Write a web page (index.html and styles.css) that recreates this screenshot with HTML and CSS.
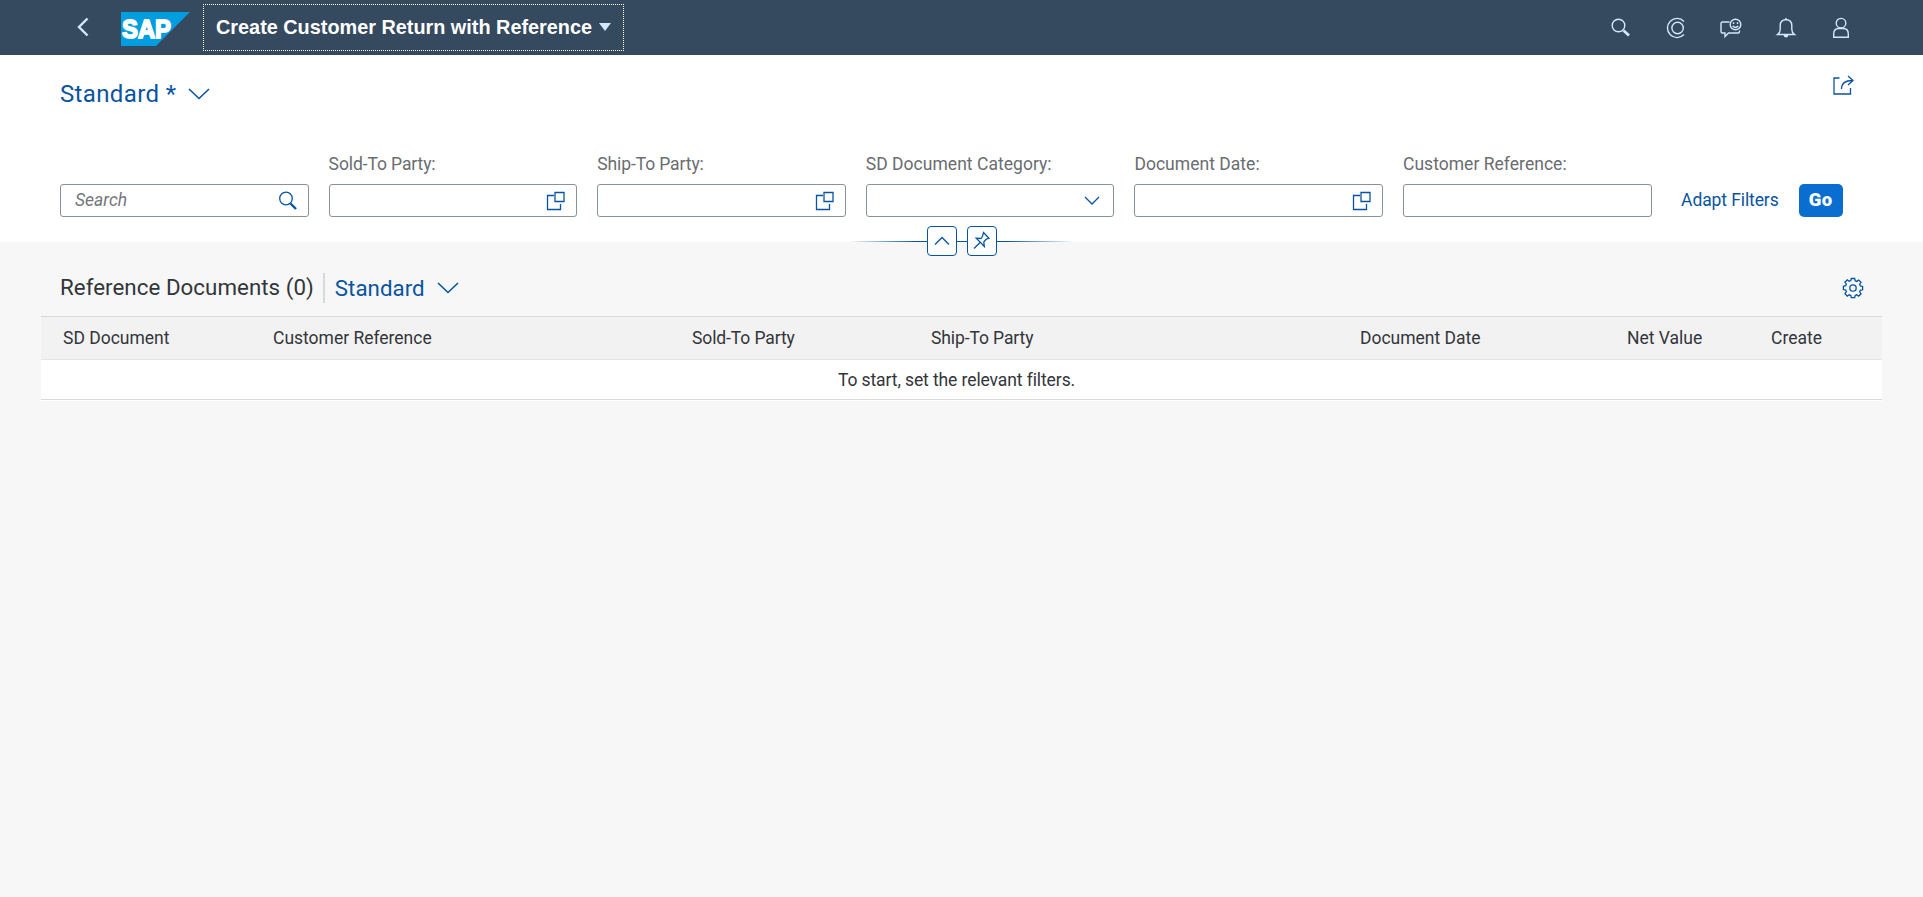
FILE: index.html
```html
<!DOCTYPE html>
<html lang="en">
<head>
<meta charset="utf-8">
<title>Create Customer Return with Reference</title>
<link rel="stylesheet" href="styles.css">
</head>
<body>
<header class="shell">
  <svg class="back" viewBox="0 0 12 20"><path d="M10.500 1.500 2 10l8.500 8.500"/></svg>
  <svg class="logo" viewBox="0 0 69 34"><path d="M0 0h69L35 34H0z"/><text x="1" y="26.300" textLength="49" lengthAdjust="spacingAndGlyphs">SAP</text></svg>
  <button class="app-title"><span>Create Customer Return with Reference</span><svg class="caret" viewBox="0 0 12 8"><path d="M0 0h12L6 8z"/></svg></button>
  <nav class="tools">
    <svg viewBox="0 0 22 22"><circle cx="8.500" cy="8.500" r="6.300"/><path class="thick" d="m13.500 13.500 5.500 5"/></svg>
    <svg viewBox="0 0 22 22"><path d="M19 4.400a9.600 9.600 0 1 0 0 13.200"/><circle cx="12.600" cy="11" r="5.700"/></svg>
    <svg viewBox="0 0 22 22"><path d="M9.500 5H2.500Q1 5 1 6.500v8Q1 16 2.500 16h2.500v3.500L8.500 16H18q1.500 0 1.500-1.500V13.500"/><circle cx="15.500" cy="7.500" r="5.300"/><path d="M13.500 5.300v1.700m4-1.700v1.700M12.700 9q2.800 2.800 5.600 0"/></svg>
    <svg viewBox="0 0 22 22"><path d="M2.500 17.500h17q-2.700-2-2.700-5V8.500q0-5.500-5.800-6Q5.200 3 5.200 8.500v4q0 3-2.700 5zM11 2.500V1"/><path class="solid" d="M8.500 18h5q-.5 2.500-2.500 2.500T8.500 18z"/></svg>
    <svg viewBox="0 0 22 22"><circle cx="11" cy="6.200" r="4.800"/><path d="M3.700 20.300v-3.300q0-5.500 5-5.500h4.600q5 0 5 5.500v3.300z"/></svg>
  </nav>
</header>
<section class="filters">
  <div class="variant-row">
    <div class="variant"><span>Standard *</span><svg class="chevron" viewBox="0 0 22 12"><path d="m1 1 10 9.500L21 1"/></svg></div>
    <svg class="share" viewBox="0 0 22 22"><path d="M7.500 4H2v16h16.500v-6M9.500 15q0-8.500 11-8.500M16 2l5 4.500-5 4.500"/></svg>
  </div>
  <div class="fields">
    <div class="field"><div class="input"><i class="placeholder">Search</i><svg class="icon" viewBox="0 0 20 20"><circle cx="8" cy="7.500" r="6.300"/><path class="thick" d="m12.500 12.500 5.500 5.500"/></svg></div></div>
    <div class="field"><label class="tight">Sold-To Party:</label><div class="input"><svg class="icon" viewBox="0 0 20 20"><path d="M8 4.500H1.500v14h13V13M9 1.500h9v9H9z"/></svg></div></div>
    <div class="field"><label class="tight">Ship-To Party:</label><div class="input"><svg class="icon" viewBox="0 0 20 20"><path d="M8 4.500H1.500v14h13V13M9 1.500h9v9H9z"/></svg></div></div>
    <div class="field"><label>SD Document Category:</label><div class="input"><svg class="icon arrow" viewBox="0 0 16 10"><path d="m1 1 7 7 7-7"/></svg></div></div>
    <div class="field"><label>Document Date:</label><div class="input"><svg class="icon" viewBox="0 0 20 20"><path d="M8 4.500H1.500v14h13V13M9 1.500h9v9H9z"/></svg></div></div>
    <div class="field"><label>Customer Reference:</label><div class="input"></div></div>
    <a class="adapt">Adapt Filters</a>
    <button class="go">Go</button>
  </div>
  <div class="snap">
    <button><svg viewBox="0 0 28 28"><path d="m7 17.500 7-7 7 7"/></svg></button>
    <button><svg viewBox="0 0 28 28"><path d="M15.500 5.500 21 11.200l-3.200 1.300-2 2.500.5 4.500-8-8.300 4.700.3 1.500-2.200zM12 15.500l-6 6"/></svg></button>
  </div>
</section>
<main class="content">
  <div class="toolbar">
    <span class="table-title">Reference Documents (0)</span>
    <div class="table-variant"><span>Standard</span><svg class="chevron" viewBox="0 0 22 12"><path d="m1 1 10 9.500L21 1"/></svg></div>
    <svg class="gear" viewBox="0 0 22 22"><circle cx="11" cy="11" r="3.200"/><path d="M9.300 1.500h3.400l.5 2.300 1.500.6 2-1.300 2.300 2.300-1.300 2 .6 1.500 2.300.5v3.400l-2.300.5-.6 1.500 1.300 2-2.300 2.300-2-1.300-1.500.6-.5 2.300H9.300l-.5-2.300-1.500-.6-2 1.300L3 16.600l1.300-2-.6-1.500-2.300-.5V9.200l2.300-.5.6-1.500-1.300-2 2.300-2.300 2 1.300 1.500-.6z"/></svg>
  </div>
  <div class="table">
    <div class="thead"><span>SD Document</span><span>Customer Reference</span><span class="tight">Sold-To Party</span><span class="tight">Ship-To Party</span><span>Document Date</span><span>Net Value</span><span>Create</span></div>
    <div class="empty">To start, set the relevant filters.</div>
  </div>
</main>
</body>
</html>
```

FILE: styles.css
```css
body {
  margin: 0;
  min-height: 897px;
  background: #f7f7f7;
  font-family: Roboto, "Liberation Sans", sans-serif;
  font-size: 17.500px;
  color: #32363a;
}
svg { display: block; fill: none; stroke: #0854a0; stroke-width: 1.3; flex: none; }
button { font: inherit; padding: 0; cursor: pointer; box-sizing: border-box; }
.thick { stroke-width: 2.400; }

/* Shell bar */
.shell {
  display: flex;
  align-items: center;
  height: 55px;
  box-sizing: border-box;
  padding: 0 71px 0 77px;
  background: #354a5f;
}
.shell svg { stroke: #d1e8ff; stroke-width: 1.400; }
.shell .back { width: 12px; height: 20px; margin-top: -1px; stroke-width: 2.400; }
.shell .logo { width: 69px; height: 34px; margin: 3px 0 0 32px; stroke: none; }
.logo path { fill: #009de0; }
.logo text { fill: #fff; stroke: #fff; stroke-width: 1.800; stroke-linejoin: round; font: bold 26px "Liberation Sans", sans-serif; }
.app-title {
  display: flex;
  align-items: center;
  gap: 7px;
  height: 47px;
  margin-left: 13px;
  padding: 0 12px 2px;
  border: 1px dotted #fff;
  background: none;
  color: #fff;
  font: bold 19.850px/24px "Liberation Sans", sans-serif;
}
.shell .caret { width: 12px; height: 8px; fill: #d1e8ff; stroke: none; }
.tools { display: flex; gap: 33px; margin: 0 0 0 auto; }
.tools svg { width: 22px; height: 22px; }
.tools .thick { stroke-width: 2.800; }
.tools .solid { fill: #d1e8ff; stroke: none; }

/* Filter bar */
.filters {
  position: relative;
  height: 187px;
  padding: 20px 60px 0;
  box-sizing: border-box;
  background: #fff;
}
.variant-row { display: flex; justify-content: space-between; height: 79px; padding-right: 9px; }
.variant, .table-variant { display: flex; align-items: center; gap: 12px; color: #0854a0; }
.variant { height: 37px; font-size: 24px; letter-spacing: .36px; }
.chevron { width: 22px; height: 12px; stroke-width: 1.600; }
.share { width: 22px; height: 22px; margin-top: -1px; }
.fields { display: flex; align-items: flex-end; gap: 20px; }
.field { width: 248.600px; }
.field label { display: block; height: 30px; line-height: 20px; letter-spacing: .03px; color: #6a6d70; }
.field .tight { letter-spacing: -.1px; }
.input {
  display: flex;
  align-items: center;
  height: 33px;
  padding: 0 10px 0 14px;
  box-sizing: border-box;
  border: 1px solid #89919a;
  border-radius: 3px;
}
.placeholder { color: #74777a; line-height: 20px; padding-bottom: 2px; }
.icon { width: 20px; height: 20px; margin-left: auto; }
.icon.arrow { width: 16px; height: 10px; margin-right: 3px; }
.adapt { margin-left: 9.500px; line-height: 32px; padding-bottom: 1px; letter-spacing: -.1px; color: #0854a0; }
.go {
  width: 44px;
  height: 33px;
  padding-bottom: 2px;
  border: 0;
  border-radius: 5px;
  background: #0a6ed1;
  color: #fff;
  font-size: 18.500px;
  font-weight: 900;
  letter-spacing: .4px;
}
.snap {
  position: absolute;
  left: 848px;
  right: 848px;
  bottom: -14px;
  display: flex;
  justify-content: center;
  gap: 10px;
  background: linear-gradient(90deg, transparent, #0854a0 30%, #0854a0 70%, transparent) center / 100% 1px no-repeat;
}
.snap button { width: 30px; height: 30px; border: 1px solid #0854a0; border-radius: 4px; background: #fff; }
.snap svg { width: 28px; height: 28px; }

/* Table */
.content { padding: 0 41px; }
.toolbar { display: flex; align-items: center; height: 74px; padding: 18px 19px 0; box-sizing: border-box; font-size: 22.300px; }
.table-title { padding-right: 9px; height: 30px; line-height: 28px; letter-spacing: .05px; border-right: 2px solid #d9d9d9; }
.table-variant { margin-left: 10px; letter-spacing: .03px; }
.gear { width: 22px; height: 22px; margin: 0 -1px 0 auto; }
.thead {
  display: grid;
  grid-template-columns: 210px 419px 239px 429px 267px 144px 1fr;
  padding-left: 22px;
  height: 44px;
  box-sizing: border-box;
  line-height: 42px;
  letter-spacing: -.01px;
  background: #f2f2f2;
  border-top: 1px solid #d9d9d9;
  border-bottom: 1px solid #e5e5e5;
}
.thead .tight { letter-spacing: -.1px; }
.empty {
  height: 40px;
  box-sizing: border-box;
  padding-right: 10px;
  line-height: 40px;
  letter-spacing: -.1px;
  text-align: center;
  background: #fff;
  border-bottom: 1px solid #d9d9d9;
}
.table { border-bottom: 1px solid #fff; }
```
